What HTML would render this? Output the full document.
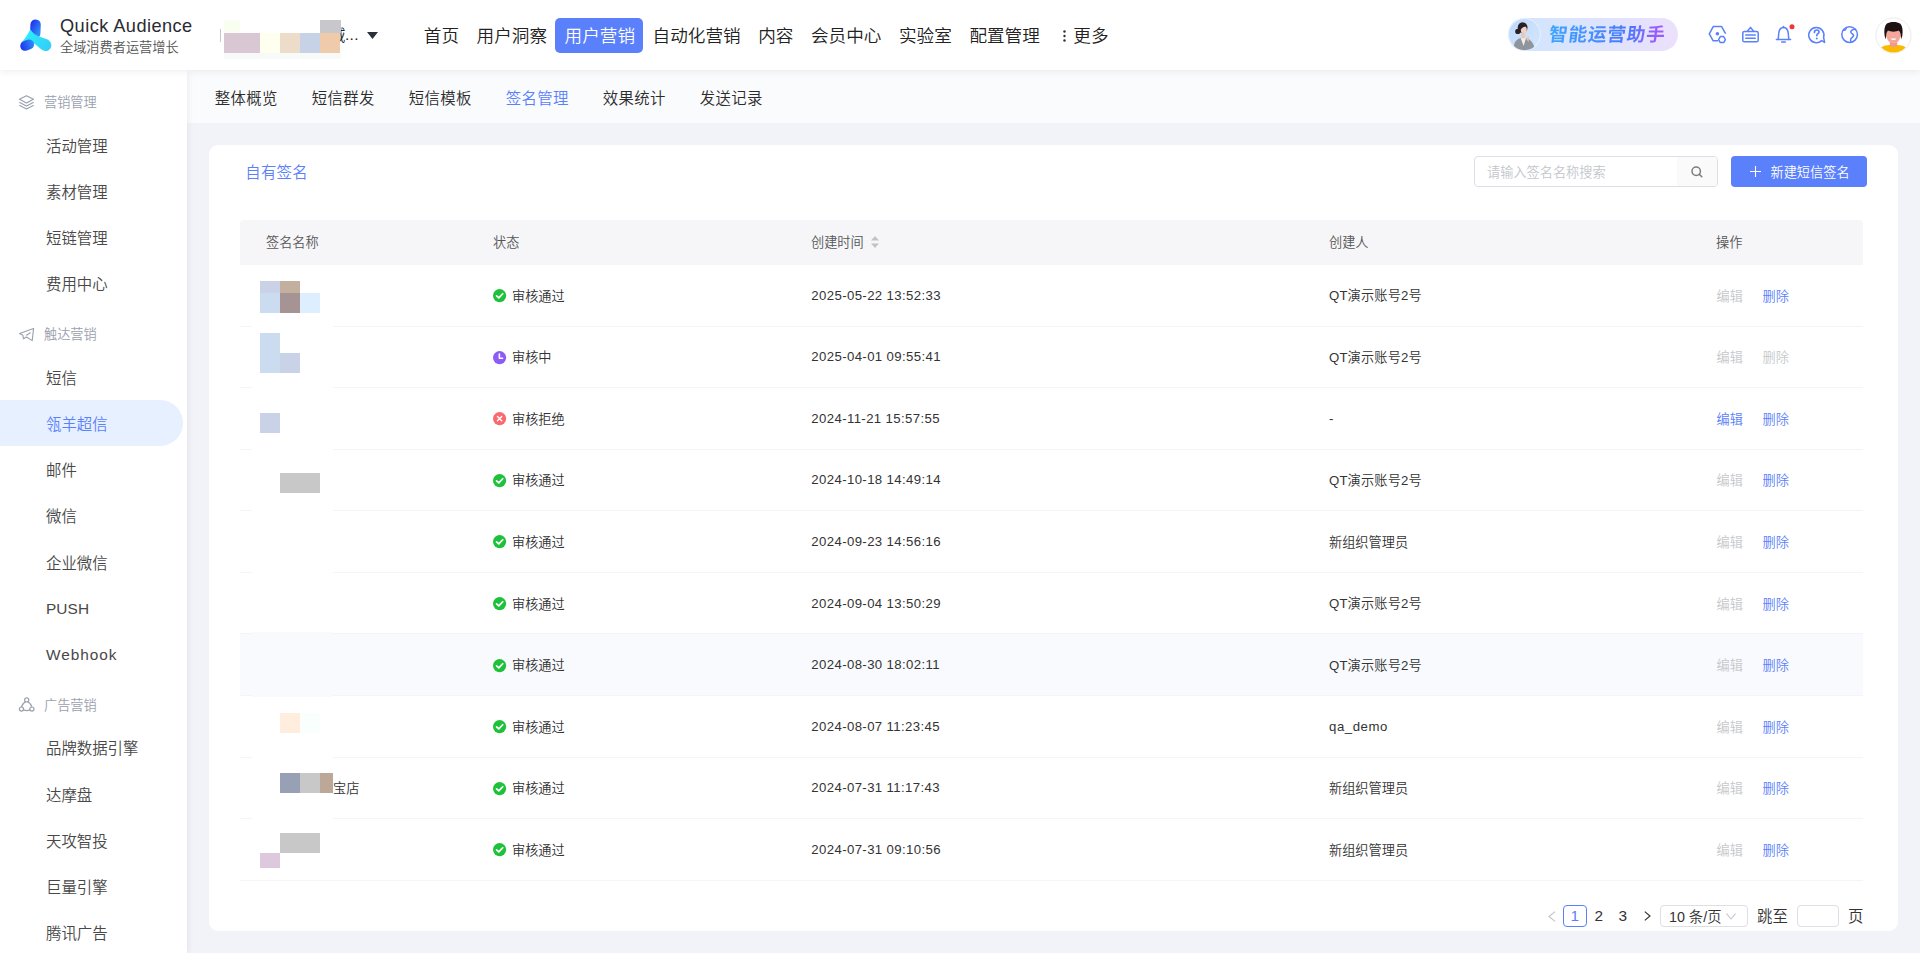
<!DOCTYPE html>
<html lang="zh-CN">
<head>
<meta charset="utf-8">
<title>Quick Audience - 签名管理</title>
<style>
*{box-sizing:border-box;margin:0;padding:0}
html,body{width:1920px;height:953px;overflow:hidden;background:#f2f3f8;font-family:"Liberation Sans","Noto Sans CJK SC",sans-serif;color:#333;font-weight:350}
body{position:relative}
.t{position:absolute;white-space:nowrap;font-style:normal}
.b{position:absolute;display:block}
svg{position:absolute;overflow:visible}
#hd{position:absolute;left:0;top:0;width:1920px;height:70px;background:#fff;box-shadow:0 1px 7px rgba(25,30,55,.085);z-index:5}
#sb{position:absolute;left:0;top:70px;width:187px;height:883px;background:#fff;box-shadow:1px 0 6px rgba(25,30,55,.07);z-index:4}
#sn{position:absolute;left:187px;top:70px;width:1733px;height:53px;background:#fafbfd;z-index:3;border-top-left-radius:8px}
#snc{position:absolute;left:187px;top:70px;width:12px;height:12px;background:#fff;z-index:2}
#card{position:absolute;left:209px;top:144.5px;width:1689px;height:786.5px;background:#fff;border-radius:9px;z-index:2}
#ct{position:absolute;left:0;top:0;width:1920px;height:953px;z-index:6}
</style>
</head>
<body>
<div id="hd"></div>
<div id="sb"></div>
<div id="snc"></div>
<div id="sn"></div>
<div id="card"></div>
<div id="ct">

<header>
<svg style="left:14px;top:14px" width="44" height="44" viewBox="14 14 44 44">
<defs>
<linearGradient id="lg1" gradientUnits="userSpaceOnUse" x1="30.5" y1="24" x2="40.5" y2="30"><stop offset="0" stop-color="#2232f0"/><stop offset="1" stop-color="#2d8cf6"/></linearGradient>
<linearGradient id="lg2" gradientUnits="userSpaceOnUse" x1="20" y1="47" x2="34" y2="42"><stop offset="0" stop-color="#2030f0"/><stop offset="1" stop-color="#2e92f7"/></linearGradient>
<linearGradient id="lg3" gradientUnits="userSpaceOnUse" x1="30" y1="32" x2="50" y2="48"><stop offset="0" stop-color="#2ceafc"/><stop offset="1" stop-color="#35cdf8"/></linearGradient>
</defs>
<path d="M35.6 24.6 L35.2 33.5" stroke="url(#lg1)" stroke-width="10.4" stroke-linecap="round" fill="none"/>
<path d="M30.3 29.3 C32.5 33 35.5 35.2 39 36.4 C42 37.4 45 38.3 47.6 39.6 C51 41.4 52.4 45.4 50.4 48.4 C48.6 51 45.4 51.6 42.8 50.2 C39.6 48.4 37.2 45.6 34.3 43.4 L26 47 L20.8 43.4 C24.4 39.5 27.8 35 30.3 29.3Z" fill="url(#lg3)"/>
<path d="M25.2 45.9 L29.2 44.4" stroke="url(#lg2)" stroke-width="9.9" stroke-linecap="round" fill="none"/>
</svg>
<span class="t " style="left:60px;top:13.7px;font-size:18.2px;line-height:24px;color:#2a2a33;letter-spacing:.45px">Quick Audience</span>
<span class="t " style="left:60px;top:39.4px;font-size:13.2px;line-height:18px;color:#555;">全域消费者运营增长</span>
<i class="b" style="left:220px;top:29px;width:1px;height:13px;background:#c3c7d0;"></i>
<span class="t " style="left:330px;top:26.4px;font-size:15.4px;line-height:20px;color:#222;">域</span>
<i class="b" style="left:224px;top:20px;width:16px;height:13px;background:#f8fff0;"></i>
<i class="b" style="left:320px;top:20px;width:21px;height:13px;background:#c8c8cc;"></i>
<i class="b" style="left:224px;top:33px;width:36px;height:20px;background:#d9c8d4;"></i>
<i class="b" style="left:260px;top:33px;width:20px;height:20px;background:#fffff0;"></i>
<i class="b" style="left:280px;top:33px;width:20px;height:20px;background:#eedccb;"></i>
<i class="b" style="left:300px;top:33px;width:20px;height:20px;background:#c8d2e6;"></i>
<i class="b" style="left:320px;top:33px;width:20px;height:20px;background:#efcbab;"></i>
<i class="b" style="left:224px;top:53px;width:117px;height:6px;background:#f8f9f9;"></i>
<span class="t " style="left:345px;top:25.4px;font-size:15.4px;line-height:20px;color:#222;letter-spacing:.3px">...</span>
<svg style="left:367px;top:32px" width="11" height="7" viewBox="0 0 11 7"><path d="M0 0H11L5.5 7Z" fill="#2b2f3a"/></svg>
<i class="b" style="left:555px;top:18px;width:88px;height:35px;background:#5b80fc;border-radius:5px"></i>
<span class="t " style="left:423.8px;top:23.2px;font-size:17.6px;line-height:26px;color:#222;">首页</span>
<span class="t " style="left:476.6px;top:23.2px;font-size:17.6px;line-height:26px;color:#222;">用户洞察</span>
<span class="t " style="left:564.5999999999999px;top:23.2px;font-size:17.6px;line-height:26px;color:#fff;">用户营销</span>
<span class="t " style="left:652.5999999999999px;top:23.2px;font-size:17.6px;line-height:26px;color:#222;">自动化营销</span>
<span class="t " style="left:758.1999999999999px;top:23.2px;font-size:17.6px;line-height:26px;color:#222;">内容</span>
<span class="t " style="left:811.0px;top:23.2px;font-size:17.6px;line-height:26px;color:#222;">会员中心</span>
<span class="t " style="left:899.0px;top:23.2px;font-size:17.6px;line-height:26px;color:#222;">实验室</span>
<span class="t " style="left:969.4px;top:23.2px;font-size:17.6px;line-height:26px;color:#222;">配置管理</span>
<span class="t " style="left:1073.3px;top:23.2px;font-size:17.6px;line-height:26px;color:#222;">更多</span>
<svg style="left:1062px;top:29px" width="5" height="14" viewBox="0 0 5 14"><circle cx="2.5" cy="2.5" r="1.2" fill="#333"/><circle cx="2.5" cy="7" r="1.2" fill="#333"/><circle cx="2.5" cy="11.5" r="1.2" fill="#333"/></svg>
<i class="b" style="left:1508px;top:18px;width:169.5px;height:32.5px;background:linear-gradient(90deg,#cfe5fc 0%,#dbe4fd 45%,#ece0fc 100%);border-radius:17px"></i>
<svg style="left:1508px;top:18px" width="33" height="33" viewBox="0 0 33 33">
<defs><clipPath id="cpA"><circle cx="16.5" cy="16.5" r="15.7"/></clipPath>
<linearGradient id="gA" x1="0" y1="0" x2="1" y2="1"><stop offset="0" stop-color="#bcd9fb"/><stop offset="1" stop-color="#d6e6fd"/></linearGradient></defs>
<circle cx="16.5" cy="16.5" r="16.2" fill="#eef4ff"/>
<circle cx="16.5" cy="16.5" r="15.5" fill="url(#gA)"/>
<g clip-path="url(#cpA)">
<path d="M5.5 33 C5.5 24 8 21.5 12.5 20 L18.5 20 C23 21.5 26.5 26 27 33Z" fill="#8f959c"/>
<path d="M12.6 20 L15.6 28 L18 20Z" fill="#f4eee8"/>
<circle cx="9.8" cy="13.4" r="2.6" fill="#2a2023"/>
<ellipse cx="14.6" cy="9.6" rx="4.9" ry="5.4" fill="#2a2023"/>
<ellipse cx="15.8" cy="11.8" rx="3" ry="3.9" fill="#efd2c5"/>
<path d="M11 8.5 C12.5 5.5 17.5 5 19.2 8.6 C17 8.2 14.5 8.8 12.6 12Z" fill="#2a2023"/>
<rect x="13.6" y="14.6" width="3" height="5.8" fill="#e9c5b5"/>
<path d="M18.2 21 C19 18.5 20.4 17.6 21 19 L20.6 24Z" fill="#e9c5b5"/>
</g></svg>
<span class="t " style="left:1548.5px;top:23.0px;font-size:18.6px;line-height:24px;color:#4d9af7;letter-spacing:.85px;font-weight:700;transform:skewX(-7deg);background:linear-gradient(90deg,#3fa4ff 0%,#4690ff 35%,#4a78fb 68%,#9a5cff 92%);-webkit-background-clip:text;background-clip:text;-webkit-text-fill-color:transparent;color:transparent">智能运营助手</span>
<svg style="left:1708px;top:25px" width="19" height="19" viewBox="0 0 19 19" fill="none" stroke="#5b80fb" stroke-width="1.5" stroke-linejoin="round" stroke-linecap="round">
<path d="M9.6 15.8 L5.2 15.8 L1.3 8.9 L5.2 1.6 L13.6 1.6 L17.3 8.2"/>
<circle cx="9.4" cy="8.7" r="1.8" fill="#5b80fb" stroke="none"/>
<path d="M10.6 14.6 L12.3 11.6 L15.7 11.6 L17.4 14.6 L15.7 17.6 L12.3 17.6Z" stroke-width="1.5"/>
</svg>
<svg style="left:1741px;top:25px" width="19" height="19" viewBox="0 0 19 19" fill="none" stroke="#5b80fb" stroke-width="1.5" stroke-linejoin="round" stroke-linecap="round">
<rect x="1.8" y="6.4" width="15.4" height="10.4" rx="1.6"/>
<path d="M6.4 6.2 L9.5 2.4 L12.6 6.2"/>
<path d="M4.8 10 H14.2 M4.8 13.2 H14.2"/>
</svg>
<svg style="left:1774px;top:24px" width="22" height="21" viewBox="0 0 22 21" fill="none" stroke="#5b80fb" stroke-width="1.5" stroke-linejoin="round" stroke-linecap="round">
<path d="M2.4 15.6 H16.6 M4.2 15.4 C4.6 12 4.4 8.6 5.4 6.4 C6.2 4.6 7.6 3.6 9.5 3.6 C11.4 3.6 12.8 4.6 13.6 6.4 C14.6 8.6 14.4 12 14.8 15.4"/>
<path d="M9.5 3.4 V2.4"/>
<path d="M7.8 18 H11.2" stroke-width="1.7"/>
<circle cx="18" cy="2.8" r="2.5" fill="#f5323c" stroke="none"/>
</svg>
<svg style="left:1807px;top:25px" width="20" height="20" viewBox="0 0 20 20" fill="none" stroke="#5b80fb" stroke-width="1.5" stroke-linejoin="round" stroke-linecap="round">
<path d="M14.6 15.6 A7.6 7.6 0 1 1 16.6 12.4 L17.6 17.4 Z"/>
<path d="M7.4 7.4 C7.4 5.8 8.4 5 9.7 5 C11 5 12 5.8 12 7 C12 8.6 9.8 8.8 9.8 10.6" stroke-width="1.7"/>
<circle cx="9.8" cy="13.4" r="1" fill="#5b80fb" stroke="none"/>
</svg>
<svg style="left:1840px;top:25px" width="19" height="19" viewBox="0 0 19 19" fill="none" stroke="#5b80fb" stroke-width="1.5" stroke-linejoin="round" stroke-linecap="round">
<circle cx="9.6" cy="9.6" r="7.8"/>
<path d="M3.4 5 C4.6 5.4 5.6 5 6 3.8 C6.2 3 6 2.6 6.6 2.4"/>
<path d="M15.6 4.4 C13.4 4.2 11.4 5 10.8 6.4 C10.2 8 12.6 8.8 13.6 10.2 C14.4 11.4 11.4 12.6 10.8 14 C10.4 15 10.6 16.2 11 17"/>
</svg>
<svg style="left:1875px;top:17px" width="37" height="37" viewBox="0 0 37 37">
<defs><clipPath id="cpB"><circle cx="18.5" cy="18.5" r="17"/></clipPath></defs>
<circle cx="18.5" cy="18.5" r="17.6" fill="#fff" stroke="#ececee" stroke-width="1"/>
<g clip-path="url(#cpB)">
<path d="M3 37 C4 30 9 28.5 14 28 L23 28 C28 28.5 33 30 34 37Z" fill="#fbb900"/>
<path d="M14.8 24 H22.2 V28.6 C20.5 30.6 16.5 30.6 14.8 28.6Z" fill="#f09a8c"/>
<ellipse cx="18.5" cy="18" rx="7.2" ry="8.6" fill="#f4a69a"/>
<circle cx="11" cy="18.6" r="1.5" fill="#f4a69a"/><circle cx="26" cy="18.6" r="1.5" fill="#f4a69a"/>
<path d="M10.8 22.4 C8.8 18 8.6 9.4 12 6.6 C14.4 4.4 22.6 4.4 25 6.6 C28.4 9.4 28.2 18 26.2 22.4 C26 18.4 25.6 15.2 23.8 13.6 C20.5 15.2 15.5 14.8 13 13.6 C11.4 15.2 11 18.4 10.8 22.4Z" fill="#1d1114"/>
<path d="M15.6 21.4 C17 23.4 20 23.4 21.4 21.4Z" fill="#fff"/>
</g></svg>
</header>
<aside>
<svg style="left:18.3px;top:94px" width="17" height="17" viewBox="0 0 16 16" fill="none" stroke="#9aa1ae" stroke-width="1.1" stroke-linejoin="round" stroke-linecap="round">
<path d="M8 1.6 L14.6 5 L8 8.4 L1.4 5Z"/><path d="M1.6 8 L8 11.2 L14.4 8"/><path d="M1.6 10.9 L8 14.1 L14.4 10.9"/></svg>
<svg style="left:19px;top:326px" width="16" height="16" viewBox="0 0 16 16" fill="none" stroke="#9aa1ae" stroke-width="1.1" stroke-linejoin="round" stroke-linecap="round">
<path d="M0.6 7.6 L14.6 2.4 L13.2 14.6 L7.4 11 L4.5 12.8 L3.9 9.3 Z"/><path d="M7.6 9.2 L11.2 6.8"/></svg>
<svg style="left:18.3px;top:696.3px" width="17.4" height="17.4" viewBox="0 0 16 16" fill="none" stroke="#9aa1ae" stroke-width="1.1" stroke-linejoin="round" stroke-linecap="round">
<circle cx="8" cy="3.6" r="1.9"/><circle cx="3.2" cy="12" r="1.9"/><circle cx="12.8" cy="12" r="1.9"/>
<path d="M6.9 5.2 C5 6.4 3.6 8 3.3 10.1"/><path d="M9.1 5.2 C11 6.4 12.4 8 12.7 10.1"/><path d="M5 12.8 C7 13.6 9 13.6 11 12.8"/></svg>
<span class="t " style="left:44px;top:93.4px;font-size:13.2px;line-height:20px;color:#9aa1ae;">营销管理</span>
<span class="t " style="left:44px;top:325.4px;font-size:13.2px;line-height:20px;color:#9aa1ae;">触达营销</span>
<span class="t " style="left:44px;top:696.4px;font-size:13.2px;line-height:20px;color:#9aa1ae;">广告营销</span>
<i class="b" style="left:0px;top:400px;width:183px;height:46.2px;background:#e6f0ff;border-radius:0 23.1px 23.1px 0"></i>
<span class="t " style="left:46px;top:135.9px;font-size:15.4px;line-height:22px;color:#484848;">活动管理</span>
<span class="t " style="left:46px;top:181.9px;font-size:15.4px;line-height:22px;color:#484848;">素材管理</span>
<span class="t " style="left:46px;top:228.1px;font-size:15.4px;line-height:22px;color:#484848;">短链管理</span>
<span class="t " style="left:46px;top:274.4px;font-size:15.4px;line-height:22px;color:#484848;">费用中心</span>
<span class="t " style="left:46px;top:368.4px;font-size:15.4px;line-height:22px;color:#484848;">短信</span>
<span class="t " style="left:46px;top:414.4px;font-size:15.4px;line-height:22px;color:#5b80fc;">瓴羊超信</span>
<span class="t " style="left:46px;top:460.4px;font-size:15.4px;line-height:22px;color:#484848;">邮件</span>
<span class="t " style="left:46px;top:506.4px;font-size:15.4px;line-height:22px;color:#484848;">微信</span>
<span class="t " style="left:46px;top:552.9px;font-size:15.4px;line-height:22px;color:#484848;">企业微信</span>
<span class="t " style="left:46px;top:597.9px;font-size:15.4px;line-height:22px;color:#484848;letter-spacing:.1px">PUSH</span>
<span class="t " style="left:46px;top:643.9px;font-size:15.4px;line-height:22px;color:#484848;letter-spacing:.95px">Webhook</span>
<span class="t " style="left:46px;top:738.4px;font-size:15.4px;line-height:22px;color:#484848;">品牌数据引擎</span>
<span class="t " style="left:46px;top:784.9px;font-size:15.4px;line-height:22px;color:#484848;">达摩盘</span>
<span class="t " style="left:46px;top:830.9px;font-size:15.4px;line-height:22px;color:#484848;">天攻智投</span>
<span class="t " style="left:46px;top:877.4px;font-size:15.4px;line-height:22px;color:#484848;">巨量引擎</span>
<span class="t " style="left:46px;top:923.4px;font-size:15.4px;line-height:22px;color:#484848;">腾讯广告</span>
</aside>
<nav>
<span class="t " style="left:214.8px;top:87.9px;font-size:15.4px;line-height:22px;color:#2c2c2c;letter-spacing:.35px">整体概览</span>
<span class="t " style="left:311.8px;top:87.9px;font-size:15.4px;line-height:22px;color:#2c2c2c;letter-spacing:.35px">短信群发</span>
<span class="t " style="left:408.8px;top:87.9px;font-size:15.4px;line-height:22px;color:#2c2c2c;letter-spacing:.35px">短信模板</span>
<span class="t " style="left:505.8px;top:87.9px;font-size:15.4px;line-height:22px;color:#5b80fc;letter-spacing:.35px">签名管理</span>
<span class="t " style="left:602.8px;top:87.9px;font-size:15.4px;line-height:22px;color:#2c2c2c;letter-spacing:.35px">效果统计</span>
<span class="t " style="left:699.8px;top:87.9px;font-size:15.4px;line-height:22px;color:#2c2c2c;letter-spacing:.35px">发送记录</span>
</nav>
<main>
<section>
<span class="t " style="left:245.2px;top:161.9px;font-size:15.4px;line-height:22px;color:#5b80fc;letter-spacing:.3px">自有签名</span>
<i class="b" style="left:1474.4px;top:156px;width:243.4px;height:30.8px;background:#fff;border:1px solid #dcdfe6;border-radius:4px"></i>
<i class="b" style="left:1677px;top:157px;width:40px;height:28.8px;background:#fafafa;border-radius:0 3px 3px 0"></i>
<span class="t " style="left:1487px;top:162.9px;font-size:13.2px;line-height:20px;color:#c3c6cc;">请输入签名名称搜索</span>
<svg style="left:1690px;top:165px" width="14" height="14" viewBox="0 0 14 14" fill="none" stroke="#7d7d80" stroke-width="1.5" stroke-linecap="round"><circle cx="6.2" cy="6.2" r="4.2"/><path d="M9.4 9.4 L11.8 11.8"/></svg>
<i class="b" style="left:1731px;top:156px;width:136px;height:30.8px;background:#5b80fc;border-radius:4px"></i>
<svg style="left:1750px;top:166px" width="11" height="11" viewBox="0 0 11 11" stroke="#fff" stroke-width="1.1" fill="none"><path d="M5.5 0V11M0 5.5H11"/></svg>
<span class="t " style="left:1770.5px;top:162.9px;font-size:13.2px;line-height:20px;color:#fff;">新建短信签名</span>
</section>
<section>
<i class="b" style="left:240px;top:220px;width:1623px;height:44.6px;background:#f6f6f9;border-radius:4px 4px 0 0"></i>
<span class="t " style="left:266px;top:233.4px;font-size:13.2px;line-height:20px;color:#555;">签名名称</span>
<span class="t " style="left:493px;top:233.4px;font-size:13.2px;line-height:20px;color:#555;">状态</span>
<span class="t " style="left:811px;top:233.4px;font-size:13.2px;line-height:20px;color:#555;">创建时间</span>
<span class="t " style="left:1329px;top:233.4px;font-size:13.2px;line-height:20px;color:#555;">创建人</span>
<span class="t " style="left:1716px;top:233.4px;font-size:13.2px;line-height:20px;color:#555;">操作</span>
<svg style="left:870.5px;top:236px" width="8" height="12" viewBox="0 0 8 12"><path d="M4 0L8 4.6H0Z" fill="#c2c2c4"/><path d="M4 12L8 7.4H0Z" fill="#c2c2c4"/></svg>
<i class="b" style="left:240px;top:326px;width:1623px;height:1px;background:#f5f5f7;"></i>
<i class="b" style="left:252px;top:325px;width:81px;height:3px;background:#fff;"></i>
<svg style="left:493px;top:289.0px" width="13.2" height="13.2" viewBox="0 0 13 13"><circle cx="6.5" cy="6.5" r="6.5" fill="#1ec13a"/><path d="M3.5 6.7 L5.7 8.8 L9.6 4.7" stroke="#fff" stroke-width="1.7" fill="none" stroke-linecap="round" stroke-linejoin="round"/></svg>
<span class="t " style="left:512px;top:286.5px;font-size:13.2px;line-height:20px;color:#333;">审核通过</span>
<span class="t " style="left:811.3px;top:285.5px;font-size:13.2px;line-height:20px;color:#333;letter-spacing:.38px">2025-05-22 13:52:33</span>
<span class="t " style="left:1329px;top:286.1px;font-size:13.2px;line-height:20px;color:#333;letter-spacing:.15px">QT演示账号2号</span>
<span class="t " style="left:1716.5px;top:286.5px;font-size:13.2px;line-height:20px;color:#c6c8cc;">编辑</span>
<span class="t " style="left:1762.5px;top:286.5px;font-size:13.2px;line-height:20px;color:#5b80fc;">删除</span>
<i class="b" style="left:240px;top:387px;width:1623px;height:1px;background:#f5f5f7;"></i>
<i class="b" style="left:252px;top:386px;width:81px;height:3px;background:#fff;"></i>
<svg style="left:493px;top:350.6px" width="13.2" height="13.2" viewBox="0 0 13 13"><circle cx="6.5" cy="6.5" r="6.5" fill="#8b5cf6"/><path d="M6.3 3 V7.2 H9.4" stroke="#fff" stroke-width="1.6" fill="none" stroke-linecap="round" stroke-linejoin="round"/></svg>
<span class="t " style="left:512px;top:348.1px;font-size:13.2px;line-height:20px;color:#333;">审核中</span>
<span class="t " style="left:811.3px;top:347.1px;font-size:13.2px;line-height:20px;color:#333;letter-spacing:.38px">2025-04-01 09:55:41</span>
<span class="t " style="left:1329px;top:347.7px;font-size:13.2px;line-height:20px;color:#333;letter-spacing:.15px">QT演示账号2号</span>
<span class="t " style="left:1716.5px;top:348.1px;font-size:13.2px;line-height:20px;color:#c6c8cc;">编辑</span>
<span class="t " style="left:1762.5px;top:348.1px;font-size:13.2px;line-height:20px;color:#c6c8cc;">删除</span>
<i class="b" style="left:240px;top:449px;width:1623px;height:1px;background:#f5f5f7;"></i>
<i class="b" style="left:252px;top:448px;width:81px;height:3px;background:#fff;"></i>
<svg style="left:493px;top:412.2px" width="13.2" height="13.2" viewBox="0 0 13 13"><circle cx="6.5" cy="6.5" r="6.5" fill="#f9696e"/><path d="M4.4 4.4 L8.6 8.6 M8.6 4.4 L4.4 8.6" stroke="#fff" stroke-width="1.4" fill="none" stroke-linecap="round"/></svg>
<span class="t " style="left:512px;top:409.7px;font-size:13.2px;line-height:20px;color:#333;">审核拒绝</span>
<span class="t " style="left:811.3px;top:408.7px;font-size:13.2px;line-height:20px;color:#333;letter-spacing:.38px">2024-11-21 15:57:55</span>
<span class="t " style="left:1329px;top:408.7px;font-size:13.2px;line-height:20px;color:#333;">-</span>
<span class="t " style="left:1716.5px;top:409.7px;font-size:13.2px;line-height:20px;color:#5b80fc;">编辑</span>
<span class="t " style="left:1762.5px;top:409.7px;font-size:13.2px;line-height:20px;color:#5b80fc;">删除</span>
<i class="b" style="left:240px;top:510px;width:1623px;height:1px;background:#f5f5f7;"></i>
<i class="b" style="left:252px;top:509px;width:81px;height:3px;background:#fff;"></i>
<svg style="left:493px;top:473.8px" width="13.2" height="13.2" viewBox="0 0 13 13"><circle cx="6.5" cy="6.5" r="6.5" fill="#1ec13a"/><path d="M3.5 6.7 L5.7 8.8 L9.6 4.7" stroke="#fff" stroke-width="1.7" fill="none" stroke-linecap="round" stroke-linejoin="round"/></svg>
<span class="t " style="left:512px;top:471.3px;font-size:13.2px;line-height:20px;color:#333;">审核通过</span>
<span class="t " style="left:811.3px;top:470.3px;font-size:13.2px;line-height:20px;color:#333;letter-spacing:.38px">2024-10-18 14:49:14</span>
<span class="t " style="left:1329px;top:470.9px;font-size:13.2px;line-height:20px;color:#333;letter-spacing:.15px">QT演示账号2号</span>
<span class="t " style="left:1716.5px;top:471.3px;font-size:13.2px;line-height:20px;color:#c6c8cc;">编辑</span>
<span class="t " style="left:1762.5px;top:471.3px;font-size:13.2px;line-height:20px;color:#5b80fc;">删除</span>
<i class="b" style="left:240px;top:572px;width:1623px;height:1px;background:#f5f5f7;"></i>
<i class="b" style="left:252px;top:571px;width:81px;height:3px;background:#fff;"></i>
<svg style="left:493px;top:535.4px" width="13.2" height="13.2" viewBox="0 0 13 13"><circle cx="6.5" cy="6.5" r="6.5" fill="#1ec13a"/><path d="M3.5 6.7 L5.7 8.8 L9.6 4.7" stroke="#fff" stroke-width="1.7" fill="none" stroke-linecap="round" stroke-linejoin="round"/></svg>
<span class="t " style="left:512px;top:532.9px;font-size:13.2px;line-height:20px;color:#333;">审核通过</span>
<span class="t " style="left:811.3px;top:531.9px;font-size:13.2px;line-height:20px;color:#333;letter-spacing:.38px">2024-09-23 14:56:16</span>
<span class="t " style="left:1329px;top:532.9px;font-size:13.2px;line-height:20px;color:#333;">新组织管理员</span>
<span class="t " style="left:1716.5px;top:532.9px;font-size:13.2px;line-height:20px;color:#c6c8cc;">编辑</span>
<span class="t " style="left:1762.5px;top:532.9px;font-size:13.2px;line-height:20px;color:#5b80fc;">删除</span>
<i class="b" style="left:240px;top:633px;width:1623px;height:1px;background:#f5f5f7;"></i>
<i class="b" style="left:252px;top:632px;width:81px;height:3px;background:#f9fafc;"></i>
<svg style="left:493px;top:597.0px" width="13.2" height="13.2" viewBox="0 0 13 13"><circle cx="6.5" cy="6.5" r="6.5" fill="#1ec13a"/><path d="M3.5 6.7 L5.7 8.8 L9.6 4.7" stroke="#fff" stroke-width="1.7" fill="none" stroke-linecap="round" stroke-linejoin="round"/></svg>
<span class="t " style="left:512px;top:594.5px;font-size:13.2px;line-height:20px;color:#333;">审核通过</span>
<span class="t " style="left:811.3px;top:593.5px;font-size:13.2px;line-height:20px;color:#333;letter-spacing:.38px">2024-09-04 13:50:29</span>
<span class="t " style="left:1329px;top:594.1px;font-size:13.2px;line-height:20px;color:#333;letter-spacing:.15px">QT演示账号2号</span>
<span class="t " style="left:1716.5px;top:594.5px;font-size:13.2px;line-height:20px;color:#c6c8cc;">编辑</span>
<span class="t " style="left:1762.5px;top:594.5px;font-size:13.2px;line-height:20px;color:#5b80fc;">删除</span>
<i class="b" style="left:240px;top:634px;width:1623px;height:61px;background:#f8fafd;"></i>
<i class="b" style="left:240px;top:695px;width:1623px;height:1px;background:#f5f5f7;"></i>
<i class="b" style="left:252px;top:694px;width:81px;height:3px;background:#f9fafc;"></i>
<svg style="left:493px;top:658.6px" width="13.2" height="13.2" viewBox="0 0 13 13"><circle cx="6.5" cy="6.5" r="6.5" fill="#1ec13a"/><path d="M3.5 6.7 L5.7 8.8 L9.6 4.7" stroke="#fff" stroke-width="1.7" fill="none" stroke-linecap="round" stroke-linejoin="round"/></svg>
<span class="t " style="left:512px;top:656.1px;font-size:13.2px;line-height:20px;color:#333;">审核通过</span>
<span class="t " style="left:811.3px;top:655.1px;font-size:13.2px;line-height:20px;color:#333;letter-spacing:.38px">2024-08-30 18:02:11</span>
<span class="t " style="left:1329px;top:655.7px;font-size:13.2px;line-height:20px;color:#333;letter-spacing:.15px">QT演示账号2号</span>
<span class="t " style="left:1716.5px;top:656.1px;font-size:13.2px;line-height:20px;color:#c6c8cc;">编辑</span>
<span class="t " style="left:1762.5px;top:656.1px;font-size:13.2px;line-height:20px;color:#5b80fc;">删除</span>
<i class="b" style="left:240px;top:757px;width:1623px;height:1px;background:#f5f5f7;"></i>
<i class="b" style="left:252px;top:756px;width:81px;height:3px;background:#fff;"></i>
<svg style="left:493px;top:720.2px" width="13.2" height="13.2" viewBox="0 0 13 13"><circle cx="6.5" cy="6.5" r="6.5" fill="#1ec13a"/><path d="M3.5 6.7 L5.7 8.8 L9.6 4.7" stroke="#fff" stroke-width="1.7" fill="none" stroke-linecap="round" stroke-linejoin="round"/></svg>
<span class="t " style="left:512px;top:717.7px;font-size:13.2px;line-height:20px;color:#333;">审核通过</span>
<span class="t " style="left:811.3px;top:716.7px;font-size:13.2px;line-height:20px;color:#333;letter-spacing:.38px">2024-08-07 11:23:45</span>
<span class="t " style="left:1329px;top:716.7px;font-size:13.2px;line-height:20px;color:#333;letter-spacing:.55px">qa_demo</span>
<span class="t " style="left:1716.5px;top:717.7px;font-size:13.2px;line-height:20px;color:#c6c8cc;">编辑</span>
<span class="t " style="left:1762.5px;top:717.7px;font-size:13.2px;line-height:20px;color:#5b80fc;">删除</span>
<i class="b" style="left:240px;top:818px;width:1623px;height:1px;background:#f5f5f7;"></i>
<i class="b" style="left:252px;top:817px;width:81px;height:3px;background:#fff;"></i>
<svg style="left:493px;top:781.8px" width="13.2" height="13.2" viewBox="0 0 13 13"><circle cx="6.5" cy="6.5" r="6.5" fill="#1ec13a"/><path d="M3.5 6.7 L5.7 8.8 L9.6 4.7" stroke="#fff" stroke-width="1.7" fill="none" stroke-linecap="round" stroke-linejoin="round"/></svg>
<span class="t " style="left:512px;top:779.3px;font-size:13.2px;line-height:20px;color:#333;">审核通过</span>
<span class="t " style="left:811.3px;top:778.3px;font-size:13.2px;line-height:20px;color:#333;letter-spacing:.38px">2024-07-31 11:17:43</span>
<span class="t " style="left:1329px;top:779.3px;font-size:13.2px;line-height:20px;color:#333;">新组织管理员</span>
<span class="t " style="left:1716.5px;top:779.3px;font-size:13.2px;line-height:20px;color:#c6c8cc;">编辑</span>
<span class="t " style="left:1762.5px;top:779.3px;font-size:13.2px;line-height:20px;color:#5b80fc;">删除</span>
<i class="b" style="left:240px;top:880px;width:1623px;height:1px;background:#f5f5f7;"></i>
<svg style="left:493px;top:843.4px" width="13.2" height="13.2" viewBox="0 0 13 13"><circle cx="6.5" cy="6.5" r="6.5" fill="#1ec13a"/><path d="M3.5 6.7 L5.7 8.8 L9.6 4.7" stroke="#fff" stroke-width="1.7" fill="none" stroke-linecap="round" stroke-linejoin="round"/></svg>
<span class="t " style="left:512px;top:840.9px;font-size:13.2px;line-height:20px;color:#333;">审核通过</span>
<span class="t " style="left:811.3px;top:839.9px;font-size:13.2px;line-height:20px;color:#333;letter-spacing:.38px">2024-07-31 09:10:56</span>
<span class="t " style="left:1329px;top:840.9px;font-size:13.2px;line-height:20px;color:#333;">新组织管理员</span>
<span class="t " style="left:1716.5px;top:840.9px;font-size:13.2px;line-height:20px;color:#c6c8cc;">编辑</span>
<span class="t " style="left:1762.5px;top:840.9px;font-size:13.2px;line-height:20px;color:#5b80fc;">删除</span>
<!-- redacted names -->
<i class="b" style="left:260px;top:281px;width:20px;height:12px;background:#c9d2e6;"></i>
<i class="b" style="left:280px;top:281px;width:20px;height:12px;background:#c3af9d;"></i>
<i class="b" style="left:260px;top:293px;width:20px;height:20px;background:#cbdcf0;"></i>
<i class="b" style="left:280px;top:293px;width:20px;height:20px;background:#a69494;"></i>
<i class="b" style="left:300px;top:293px;width:20px;height:20px;background:#ddeeff;"></i>
<i class="b" style="left:260px;top:333px;width:20px;height:40px;background:#cbdcf0;"></i>
<i class="b" style="left:280px;top:353px;width:20px;height:20px;background:#c9d2e6;"></i>
<i class="b" style="left:260px;top:413px;width:20px;height:20px;background:#c9d2e6;"></i>
<i class="b" style="left:280px;top:473px;width:40px;height:20px;background:#c8c8c8;"></i>
<i class="b" style="left:280px;top:713px;width:20px;height:20px;background:#ffeedd;"></i>
<i class="b" style="left:300px;top:713px;width:20px;height:20px;background:#f8fffd;"></i>
<i class="b" style="left:280px;top:773px;width:20px;height:20px;background:#98a0b5;"></i>
<i class="b" style="left:300px;top:773px;width:20px;height:20px;background:#c8c8c8;"></i>
<i class="b" style="left:320px;top:773px;width:13px;height:20px;background:#bba898;"></i>
<i class="b" style="left:280px;top:833px;width:40px;height:20px;background:#c8c8c8;"></i>
<i class="b" style="left:260px;top:853px;width:20px;height:15px;background:#ddc8dd;"></i>
<span class="t " style="left:333px;top:779.4px;font-size:13.2px;line-height:20px;color:#333;">宝店</span>
</section>
<footer>
<svg style="left:1547.5px;top:911px" width="8" height="11" viewBox="0 0 8 11" fill="none" stroke="#c4c6cc" stroke-width="1.2"><path d="M7 0.6 L1 5.5 L7 10.4"/></svg>
<i class="b" style="left:1563px;top:905.2px;width:24.2px;height:21.6px;background:#fff;border:1px solid #5b80fc;border-radius:4px"></i>
<span class="t " style="left:1570.6px;top:906.4px;font-size:15.4px;line-height:20px;color:#5b80fc;">1</span>
<span class="t " style="left:1594.4px;top:906.4px;font-size:15.4px;line-height:20px;color:#333;">2</span>
<span class="t " style="left:1618.6px;top:906.4px;font-size:15.4px;line-height:20px;color:#333;">3</span>
<svg style="left:1643.5px;top:911.4px" width="7" height="10" viewBox="0 0 7 10" fill="none" stroke="#333" stroke-width="1.15"><path d="M0.8 0.6 L6 5 L0.8 9.4"/></svg>
<i class="b" style="left:1660.2px;top:905.2px;width:87.5px;height:21.6px;background:#fff;border:1px solid #dcdfe6;border-radius:4px"></i>
<span class="t " style="left:1669px;top:907.0px;font-size:14.3px;line-height:20px;color:#333;">10 条/页</span>
<svg style="left:1726px;top:913px" width="10" height="7" viewBox="0 0 10 7" fill="none" stroke="#c4c6cc" stroke-width="1.1"><path d="M0.5 0.6 L5 6 L9.5 0.6"/></svg>
<span class="t " style="left:1757px;top:907.4px;font-size:15.4px;line-height:20px;color:#333;">跳至</span>
<i class="b" style="left:1797.2px;top:905.2px;width:41.5px;height:21.6px;background:#fff;border:1px solid #dcdfe6;border-radius:4px"></i>
<span class="t " style="left:1848px;top:907.4px;font-size:15.4px;line-height:20px;color:#333;">页</span>
</footer>
</main>
</div>
</body>
</html>
